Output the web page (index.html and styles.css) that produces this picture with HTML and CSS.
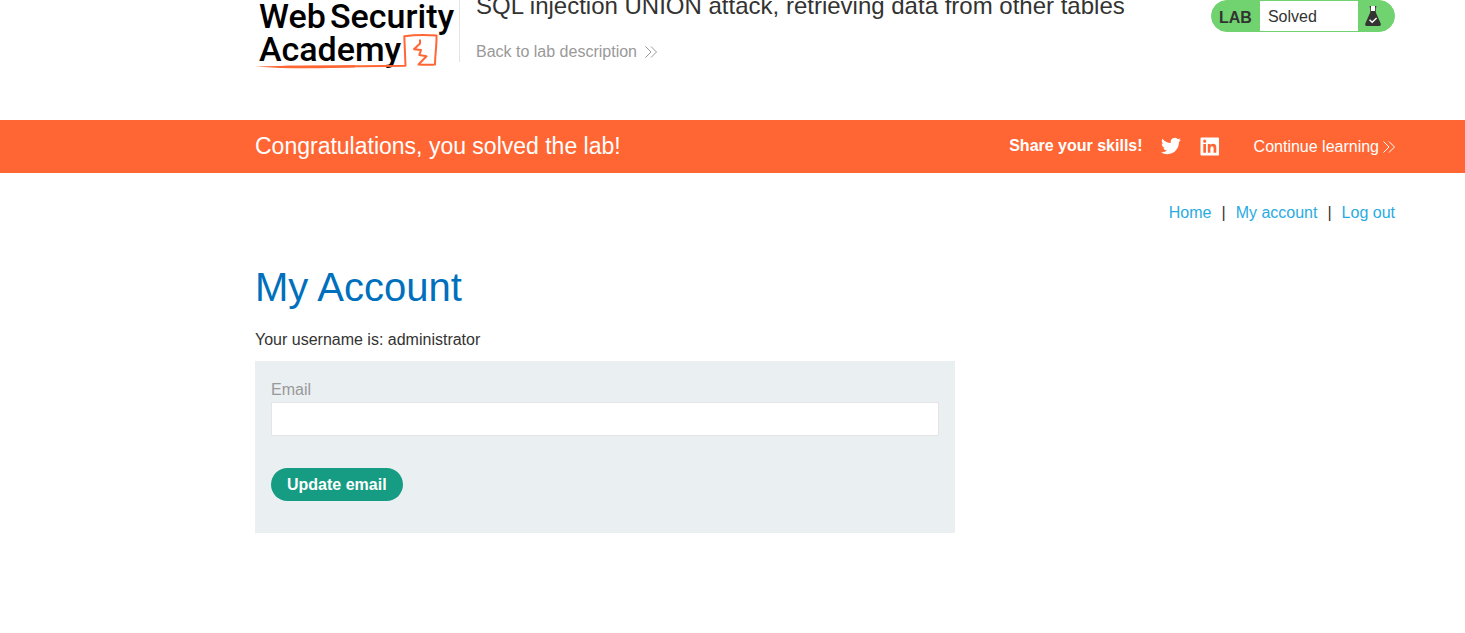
FILE: index.html
```html
<!DOCTYPE html>
<html lang="en">
<head>
<meta charset="utf-8">
<title>SQL injection UNION attack, retrieving data from other tables</title>
<link rel="stylesheet" href="styles.css">
</head>
<body>
<header class="lab-header container">
  <a class="logo" href="#" aria-label="Web Security Academy">
    <svg class="logo-art" viewBox="0 0 201 72">
      <g class="logo-text">
        <text x="4" y="28">Web</text>
        <text x="75" y="28">Security</text>
        <text x="4" y="61">Academy</text>
      </g>
      <path class="logo-line" d="M30 66.800C70 67.200 110 65.800 150.500 65.800L149.300 36.300C160 34.800 172 34.900 181.500 35.600C181.800 45 180 56 180 64.500C175 65.200 169 64.600 163.500 64.500L171.500 56.200L164.300 55L166 50L159 49.200L165 43.500L165 39.500"/>
      <path fill="#ff6633" d="M0 66.500C30 65.500 60 65.800 100 65.300V67.500C60 68.600 30 68.800 0 66.500Z"/>
    </svg>
  </a>
  <div class="title-block">
    <h2 class="title">SQL injection UNION attack, retrieving data from other tables</h2>
    <a class="back-link" href="#">Back to lab description
      <svg class="chevrons" viewBox="0 0 12 12"><path d="M0.500 0.500L6 6L0.500 11.500M6 0.500L11.500 6L6 11.500"/></svg>
    </a>
  </div>
  <div class="status">
    <span class="status-label">LAB</span>
    <span class="status-value">Solved</span>
    <svg class="flask" viewBox="0 0 16 20">
      <path fill="#fff" d="M4.500 0H11.500V1.500H10.500V6H5.500V1.500H4.500Z"/>
      <path fill="#333332" d="M4.500 0H6V1.500H10V0H11.500V1.500H10.800V6.500L15.700 17.500Q16.300 20 14 20H2Q-.3 20 .3 17.500L5.200 6.500V1.500H4.500Z"/>
      <path fill="#fff" d="M6 0H10V5H6Z"/>
      <path fill="none" stroke="#fff" stroke-width="1.400" d="M4.500 13.800L7.200 16.300L11.600 12"/>
    </svg>
  </div>
</header>
<section class="banner">
  <div class="banner-inner container">
    <h4 class="banner-title">Congratulations, you solved the lab!</h4>
    <span class="share">Share your skills!</span>
    <a class="social" href="#" aria-label="Twitter"><svg viewBox="0 0 24 24"><path fill="#fff" d="M23.950 4.570a10 10 0 0 1-2.820.77 4.960 4.960 0 0 0 2.160-2.720c-.95.55-2 .95-3.130 1.180a4.920 4.920 0 0 0-8.380 4.480C7.690 8.090 4.070 6.130 1.640 3.160a4.820 4.820 0 0 0-.67 2.480c0 1.710.87 3.210 2.190 4.100a4.900 4.900 0 0 1-2.230-.62v.06a4.920 4.920 0 0 0 3.950 4.830 5 5 0 0 1-2.210.09 4.940 4.940 0 0 0 4.600 3.420A9.870 9.870 0 0 1 0 19.540a13.990 13.990 0 0 0 7.550 2.210c9.050 0 14-7.500 14-13.980 0-.21 0-.42-.02-.63a9.940 9.940 0 0 0 2.420-2.570z"/></svg></a>
    <a class="social" href="#" aria-label="LinkedIn"><svg viewBox="0 0 20 20"><path fill="#fff" fill-rule="evenodd" d="M1.500 1.500H18Q19 1.500 19 2.500V18.500Q19 19.500 18 19.500H1.500Q.5 19.500 .5 18.500V2.500Q.5 1.500 1.500 1.500ZM3.300 8V16.800H6V8ZM4.700 3.600A1.600 1.600 0 1 0 4.700 6.800A1.600 1.600 0 1 0 4.700 3.600ZM7.800 8V16.800H10.400V12.500Q10.400 10.200 12.100 10.200Q13.600 10.200 13.600 12.500V16.800H16.300V11.500Q16.300 7.800 13.200 7.800Q11.300 7.800 10.400 9.200V8Z"/></svg></a>
    <a class="continue" href="#">Continue learning
      <svg class="chevrons" viewBox="0 0 12 12"><path d="M0.500 0.500L6 6L0.500 11.500M6 0.500L11.500 6L6 11.500"/></svg>
    </a>
  </div>
</section>
<main class="container">
  <nav class="nav">
    <a href="#">Home</a><span>|</span><a href="#">My account</a><span>|</span><a href="#">Log out</a>
  </nav>
  <h1 class="heading">My Account</h1>
  <p class="username">Your username is: administrator</p>
  <form class="email-form">
    <label class="email-label" for="email">Email</label>
    <input class="email-input" id="email" type="email">
    <button class="update" type="submit">Update email</button>
  </form>
</main>
</body>
</html>
```
FILE: styles.css
```css
* { box-sizing: border-box; }
body {
  margin: 0;
  background: #fff;
  color: #333332;
  font: 16px/20px "Liberation Sans", Arial, sans-serif;
}
a { text-decoration: none; }
.container { padding: 0 70px 0 255px; }
.lab-header {
  display: flex;
  align-items: flex-start;
  min-height: 120px;
}
.logo { display: block; width: 205px; height: 62px; border-right: 1px solid #e5e5e5; }
.logo-art { display: block; width: 201px; height: 72px; overflow: visible; }
.logo-text { font: 500 34px Roboto, sans-serif; fill: #000; }
.logo-line { fill: none; stroke: #ff6633; stroke-width: 2; stroke-linejoin: round; }
.title-block { flex: 1; padding-left: 16px; }
.title { margin: -8px 0 22px; font-size: 24px; line-height: 28px; font-weight: 400; }
.back-link { display: inline-flex; align-items: center; gap: 8px; color: #999; }
.chevrons { width: 12px; height: 12px; fill: none; stroke: currentColor; stroke-width: 1; }
.status {
  display: flex;
  align-items: center;
  height: 32px;
  width: 184px;
  border: 1px solid #70d36f;
  border-radius: 16px;
  background: #70d36f;
  overflow: hidden;
}
.status-label { padding: 3px 8px 0 7px; font-weight: 700; }
.status-value { flex: 1; height: 30px; padding-left: 8px; line-height: 32px; background: #fff; }
.flask { width: 16px; height: 20px; margin: 0 13px 0 7px; }
.banner { background: #ff6633; color: #fff; }
.banner-inner { display: flex; align-items: center; min-height: 53px; padding-bottom: 2px; }
.banner-title { flex: 1; margin: 0; font-size: 23px; line-height: 28px; font-weight: 400; }
.share { margin-right: 18px; font-weight: 700; }
.social { width: 20px; height: 20px; margin-right: 19px; }
.social svg { display: block; width: 20px; height: 20px; }
.continue { display: inline-flex; align-items: center; gap: 4px; margin-left: 15px; padding-top: 2px; color: #fff; }
.nav { display: flex; justify-content: flex-end; gap: 10px; padding-top: 30px; }
.nav a { color: #29abe2; }
.heading { margin: 40px 0 19px; color: #0070bd; font-size: 40px; line-height: 48px; font-weight: 400; }
.username { margin: 0 0 11px; }
.email-form { max-width: 700px; padding: 16px 16px 32px; background: #eaeff2; }
.email-label { display: block; padding: 3px 0 2px; color: #999; }
.email-input {
  display: block;
  width: 100%;
  height: 34px;
  margin-bottom: 32px;
  padding: 0 8px;
  border: 1px solid #e5e5e5;
  background: #fff;
  font: inherit;
}
.update {
  display: block;
  height: 33px;
  padding: 0 16px;
  border: 0;
  border-radius: 17px;
  background: #169c82;
  color: #fff;
  font: inherit;
  font-weight: 700;
}
```
